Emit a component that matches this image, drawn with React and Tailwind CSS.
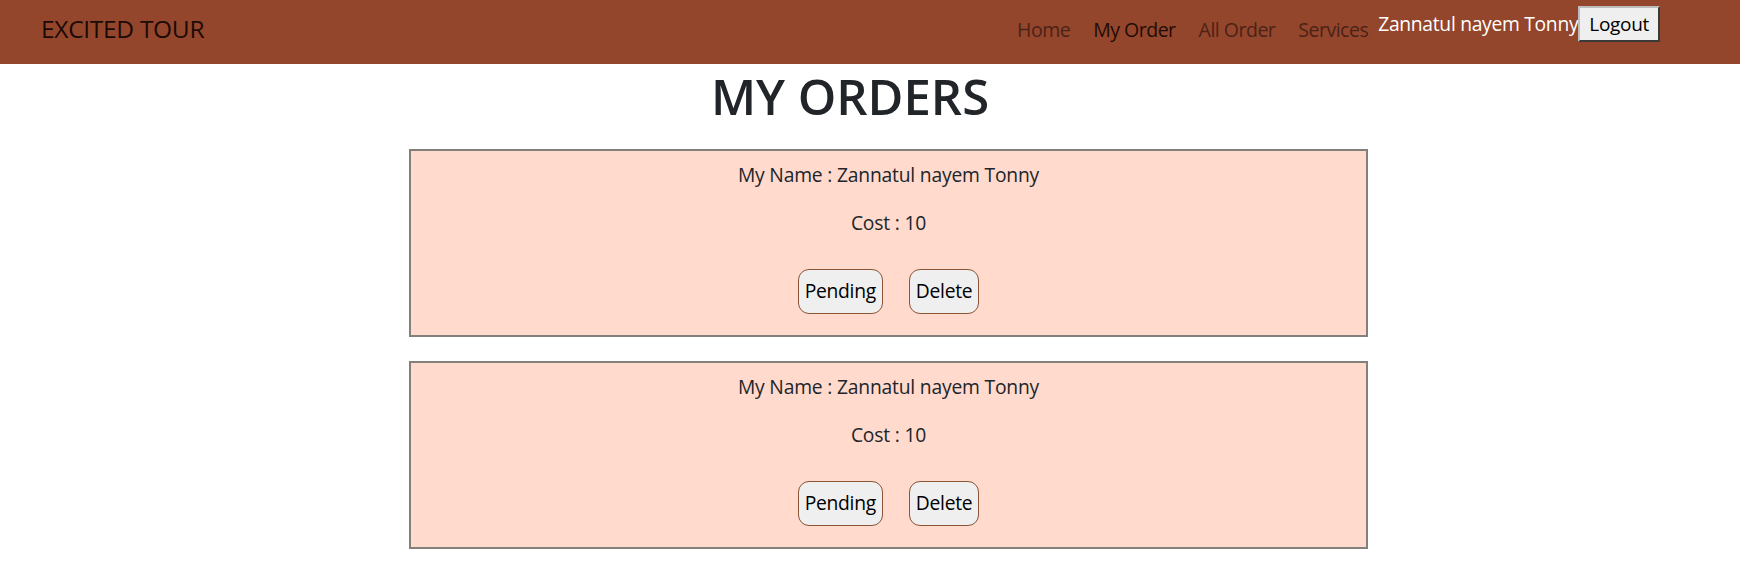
import React from 'react';

const orders = [
  { id: 1, name: 'Zannatul nayem Tonny', cost: 10 },
  { id: 2, name: 'Zannatul nayem Tonny', cost: 10 },
];

const Navbar = () => (
  <nav className="h-[64px] bg-[#94462c] flex items-start pl-[41px] pr-[80px]">
    <a className="text-[24.5px] leading-[34px] mt-[12px] text-[#1c0a05] tracking-[-0.3px]">EXCITED TOUR</a>
    <div className="ml-auto flex items-start">
      <a className="text-[19.5px] leading-[30px] mt-[15px] text-[#4a2216] mr-[23px] tracking-[-0.5px]">Home</a>
      <a className="text-[19.5px] leading-[30px] mt-[15px] text-[#1f0c06] mr-[23px] tracking-[-0.5px]">My Order</a>
      <a className="text-[19.5px] leading-[30px] mt-[15px] text-[#4a2216] mr-[23px] tracking-[-0.5px]">All Order</a>
      <a className="text-[19.5px] leading-[30px] mt-[15px] text-[#4a2216] mr-[10px] tracking-[-0.5px]">Services</a>
      <div className="flex items-center mt-[6px]">
        <span className="text-[19.3px] text-white tracking-[-0.3px]">Zannatul nayem Tonny</span>
        <button className="h-[36px] px-[9px] text-[19px] text-black bg-[#efefef] border-2 border-t-[#bdbdbd] border-l-[#bdbdbd] border-r-[#3a3a3a] border-b-[#3a3a3a] tracking-[-0.3px]">
          Logout
        </button>
      </div>
    </div>
  </nav>
);

const OrderCard = ({ order }) => (
  <div className="border-2 border-[#857f7c] bg-[#ffdacd] text-center text-[#212529] pt-[8px] pb-[21px] mb-[24px]">
    <p className="text-[19.3px] leading-[31px] tracking-[-0.2px]">My Name : {order.name}</p>
    <p className="text-[19.3px] leading-[31px] mt-[17px] tracking-[-0.2px]">Cost : {order.cost}</p>
    <div className="flex justify-center gap-[26px] mt-[31px]">
      <button className="h-[45px] px-[6px] text-[19.3px] text-black bg-[#efefef] border border-[#8a5435] rounded-[11px] tracking-[-0.3px]">
        Pending
      </button>
      <button className="h-[45px] px-[6px] text-[19.3px] text-black bg-[#efefef] border border-[#8a5435] rounded-[11px] tracking-[-0.3px]">
        Delete
      </button>
    </div>
  </div>
);

export default function App() {
  return (
    <div className="min-h-screen bg-white" style={{ fontFamily: '"Open Sans", "Noto Sans", sans-serif' }}>
      <Navbar />
      <h1 className="text-center pr-[40px] text-[49px] leading-[60px] font-semibold text-[#212529] mt-[2px] mb-[23px]">
        MY ORDERS
      </h1>
      <div className="w-[959px] ml-[409px]">
        {orders.map((order) => (
          <OrderCard key={order.id} order={order} />
        ))}
      </div>
    </div>
  );
}
